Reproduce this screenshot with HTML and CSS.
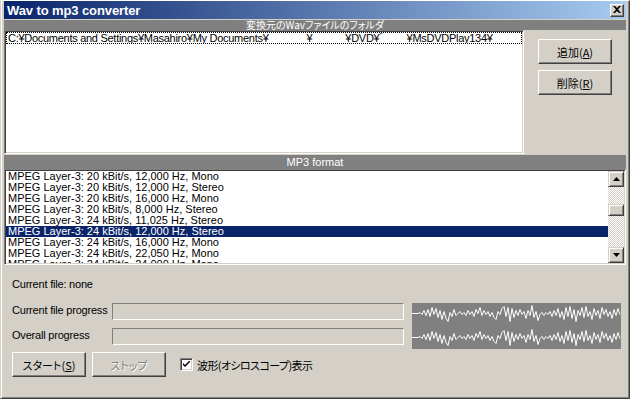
FILE: index.html
```html
<!DOCTYPE html>
<html lang="ja">
<head>
<meta charset="utf-8">
<title>Wav to mp3 converter</title>
<link rel="stylesheet" href="styles.css">
</head>
<body>
<div class="window">
  <div class="titlebar">
    <span class="title">Wav to mp3 converter</span>
    <span class="close"><svg width="8" height="7" viewBox="0 0 8 7"><path d="M0 0 L2 0 L4 2 L6 0 L8 0 L5 3.5 L8 7 L6 7 L4 5 L2 7 L0 7 L3 3.5 Z" fill="#000"/></svg></span>
  </div>
  <div class="panel-head head1">変換元のWavファイルのフォルダ</div>
  <div class="top-row">
    <div class="listbox folders">
      <div class="path-item">C:¥Documents and Settings¥Masahiro¥My Documents¥<span class="gap gap-a"></span>¥<span class="gap gap-b"></span>¥DVD¥ﾞ<span class="gap gap-c"></span>¥MsDVDPlay134¥</div>
    </div>
    <div class="side-buttons">
      <button class="btn">追加(<u>A</u>)</button>
      <button class="btn">削除(<u>R</u>)</button>
    </div>
  </div>
  <div class="panel-head head2">MP3 format</div>
  <div class="listbox formats">
    <div class="items">
      <div class="item">MPEG Layer-3: 20 kBit/s, 12,000 Hz, Mono</div>
      <div class="item">MPEG Layer-3: 20 kBit/s, 12,000 Hz, Stereo</div>
      <div class="item">MPEG Layer-3: 20 kBit/s, 16,000 Hz, Mono</div>
      <div class="item">MPEG Layer-3: 20 kBit/s, 8,000 Hz, Stereo</div>
      <div class="item">MPEG Layer-3: 24 kBit/s, 11,025 Hz, Stereo</div>
      <div class="item selected">MPEG Layer-3: 24 kBit/s, 12,000 Hz, Stereo</div>
      <div class="item">MPEG Layer-3: 24 kBit/s, 16,000 Hz, Mono</div>
      <div class="item">MPEG Layer-3: 24 kBit/s, 22,050 Hz, Mono</div>
      <div class="item">MPEG Layer-3: 24 kBit/s, 24,000 Hz, Mono</div>
    </div>
    <div class="scrollbar">
      <div class="sb-btn"><svg width="7" height="4" viewBox="0 0 7 4"><path d="M3.5 0 L7 4 L0 4 Z" fill="#000"/></svg></div>
      <div class="sb-track">
        <div class="sb-space1"></div>
        <div class="sb-thumb"></div>
        <div class="sb-space2"></div>
      </div>
      <div class="sb-btn"><svg width="7" height="4" viewBox="0 0 7 4"><path d="M0 0 L7 0 L3.5 4 Z" fill="#000"/></svg></div>
    </div>
  </div>
  <div class="bottom">
    <div class="status">Current file: none</div>
    <div class="progress-area">
      <div class="progress-col">
        <div class="prow">
          <span class="plabel">Current file progress</span>
          <div class="pbar"></div>
        </div>
        <div class="prow">
          <span class="plabel">Overall progress</span>
          <div class="pbar"></div>
        </div>
      </div>
      <div class="scope">
        <svg width="209" height="46" viewBox="0 0 209 46">
          <defs>
            <polyline id="wave" fill="none" stroke="#fff" stroke-width="1" points="0,0 2,0 4,0 6,0 8,-1 10,1 12,-3 14,2 16,-4 18,3 20,-6 22,1 24,-5 26,4 28,-3 30,6 32,-2 34,5 36,8 38,-1 40,3 42,-4 44,2 46,0 48,-2 50,1 52,-1 54,2 56,-3 58,1 60,-2 62,3 64,-4 66,0 68,-6 70,2 72,-3 74,1 76,-2 78,3 80,-1 82,4 84,6 86,-2 88,1 90,-5 92,-7 94,3 96,-6 98,8 100,-5 102,4 104,-3 106,2 108,-4 110,1 112,-2 114,5 116,-3 118,2 120,-8 122,4 124,-2 126,7 128,1 130,-1 132,2 134,-1 136,1 138,-2 140,3 142,-3 144,2 146,-5 148,4 150,-2 152,6 154,-6 156,3 158,-7 160,5 162,-4 164,8 166,-3 168,2 170,-6 172,4 174,-7 176,3 178,-2 180,6 182,-5 184,2 186,-3 188,5 190,-6 192,1 194,-4 196,3 198,-2 200,5 202,-4 204,2 206,-5 208,1"/>
          </defs>
          <use href="#wave" transform="translate(0,10.5)"/>
          <use href="#wave" transform="translate(0,34.5)"/>
        </svg>
      </div>
    </div>
    <div class="actions">
      <button class="btn">スタート(<u>S</u>)</button>
      <button class="btn disabled">ストップ</button>
      <label class="check">
        <span class="box"><svg width="7" height="7" viewBox="0 0 7 7"><path d="M0 2 L0 4 L2 6 L7 1 L7 -1 L2 4 Z" fill="#000"/></svg></span>
        <span class="check-label">波形(オシロスコープ)表示</span>
      </label>
    </div>
  </div>
</div>
</body>
</html>
```

FILE: styles.css
```css
* {
  box-sizing: border-box;
  margin: 0;
  padding: 0;
}

html, body {
  width: 630px;
  height: 399px;
  overflow: hidden;
  background: #d4d0c8;
}

body {
  font-family: "Liberation Sans", "Noto Sans CJK JP", sans-serif;
  font-size: 11px;
  color: #000;
}

.window {
  width: 630px;
  height: 399px;
  border-style: solid;
  border-width: 1px;
  border-color: #ffffff #404040 #404040 #d4d0c8;
  box-shadow: inset 1px 0 #ffffff, inset -1px -1px #808080;
  padding: 0 3px 3px 3px;
  display: flex;
  flex-direction: column;
}

.titlebar {
  height: 18px;
  background: linear-gradient(to right, #0a246a, #a6caf0);
  display: flex;
  align-items: center;
  justify-content: space-between;
  padding: 0 2px 0 3px;
  margin-bottom: 1px;
}

.title {
  color: #fff;
  font-family: "Liberation Sans", sans-serif;
  font-weight: bold;
  font-size: 13px;
  letter-spacing: -0.1px;
}

.close {
  width: 14px;
  height: 13px;
  background: #d4d0c8;
  border-style: solid;
  border-width: 1px;
  border-color: #ffffff #404040 #404040 #ffffff;
  box-shadow: inset -1px -1px #808080;
  display: flex;
  align-items: center;
  justify-content: center;
}

.close svg {
  display: block;
  margin: 0 1px 1px 0;
}

.panel-head {
  background: #808080;
  color: #fff;
  text-align: center;
  font-family: "Noto Sans CJK JP", "Liberation Sans", sans-serif;
  font-feature-settings: "palt";
}

.head1 {
  height: 10px;
  font-size: 10px;
  line-height: 10px;
}

.head2 {
  margin-top: 1px;
  height: 14px;
  line-height: 14px;
  font-size: 11px;
  font-family: "Liberation Sans", sans-serif;
}

.listbox {
  background: #fff;
  border-style: solid;
  border-width: 1px;
  border-color: #808080 #ffffff #ffffff #808080;
  box-shadow: inset 1px 1px #404040, inset -1px -1px #d4d0c8;
  padding: 1px;
}

.top-row {
  display: flex;
  height: 124px;
}

.folders {
  width: 520px;
  height: 124px;
}

.path-item {
  height: 12px;
  line-height: 11px;
  border: 1px dotted #000;
  padding-left: 1px;
  white-space: nowrap;
  overflow: hidden;
  font-size: 11px;
  letter-spacing: -0.28px;
}

.gap {
  display: inline-block;
}

.gap-a {
  width: 38px;
}

.gap-b {
  width: 33px;
}

.gap-c {
  width: 22px;
}

.side-buttons {
  display: flex;
  flex-direction: column;
  gap: 6px;
  padding: 9px 0 0 14px;
}

.btn {
  width: 74px;
  height: 25px;
  background: #d4d0c8;
  border-style: solid;
  border-width: 1px;
  border-color: #ffffff #404040 #404040 #ffffff;
  box-shadow: inset -1px -1px #808080;
  font-family: "Noto Sans CJK JP", "Liberation Sans", sans-serif;
  font-feature-settings: "palt";
  font-size: 11px;
  color: #000;
  display: flex;
  align-items: center;
  justify-content: center;
}

.btn u {
  text-underline-offset: 1px;
}

.btn.disabled {
  color: #808080;
  text-shadow: 1px 1px 0 #ffffff;
}

.formats {
  height: 96px;
  display: flex;
}

.items {
  flex: 1;
  overflow: hidden;
}

.item {
  height: 11px;
  line-height: 11px;
  padding-left: 2px;
  white-space: nowrap;
}

.item.selected {
  background: #0a246a;
  color: #fff;
}

.scrollbar {
  width: 16px;
  display: flex;
  flex-direction: column;
}

.sb-btn {
  height: 16px;
  background: #d4d0c8;
  border-style: solid;
  border-width: 1px;
  border-color: #d4d0c8 #404040 #404040 #d4d0c8;
  box-shadow: inset 1px 1px #ffffff, inset -1px -1px #808080;
  display: flex;
  align-items: center;
  justify-content: center;
}

.sb-btn svg {
  display: block;
}

.sb-track {
  flex: 1;
  display: flex;
  flex-direction: column;
  background: repeating-conic-gradient(#ffffff 0 25%, #d4d0c8 0 50%) 0 0 / 2px 2px;
}

.sb-space1 {
  height: 17px;
}

.sb-thumb {
  height: 12px;
  background: #d4d0c8;
  border-style: solid;
  border-width: 1px;
  border-color: #d4d0c8 #404040 #404040 #d4d0c8;
  box-shadow: inset 1px 1px #ffffff, inset -1px -1px #808080;
}

.sb-space2 {
  flex: 1;
}

.bottom {
  padding-left: 8px;
  display: flex;
  flex-direction: column;
  letter-spacing: -0.2px;
}

.status {
  margin-top: 13px;
  height: 13px;
  line-height: 13px;
}

.progress-area {
  display: flex;
  margin-top: 12px;
}

.progress-col {
  display: flex;
  flex-direction: column;
  gap: 8px;
}

.prow {
  display: flex;
  align-items: center;
  height: 17px;
}

.plabel {
  width: 100px;
  white-space: nowrap;
  position: relative;
  top: -2px;
}

.pbar {
  width: 292px;
  height: 17px;
  border-style: solid;
  border-width: 1px;
  border-color: #808080 #ffffff #ffffff #808080;
}

.scope {
  margin-left: 8px;
  width: 209px;
  height: 46px;
  background: #808080;
}

.scope svg {
  display: block;
}

.actions {
  display: flex;
  align-items: center;
  gap: 6px;
  margin-top: 3px;
  letter-spacing: 0;
}

.check {
  display: flex;
  align-items: center;
  gap: 4px;
  margin-left: 8px;
}

.box {
  width: 13px;
  height: 13px;
  background: #fff;
  border-style: solid;
  border-width: 1px;
  border-color: #808080 #ffffff #ffffff #808080;
  box-shadow: inset 1px 1px #404040, inset -1px -1px #d4d0c8;
  display: flex;
  align-items: center;
  justify-content: center;
}

.box svg {
  display: block;
}

.check-label {
  font-family: "Noto Sans CJK JP", sans-serif;
  font-feature-settings: "palt";
  font-size: 11px;
  letter-spacing: -0.6px;
}
```
